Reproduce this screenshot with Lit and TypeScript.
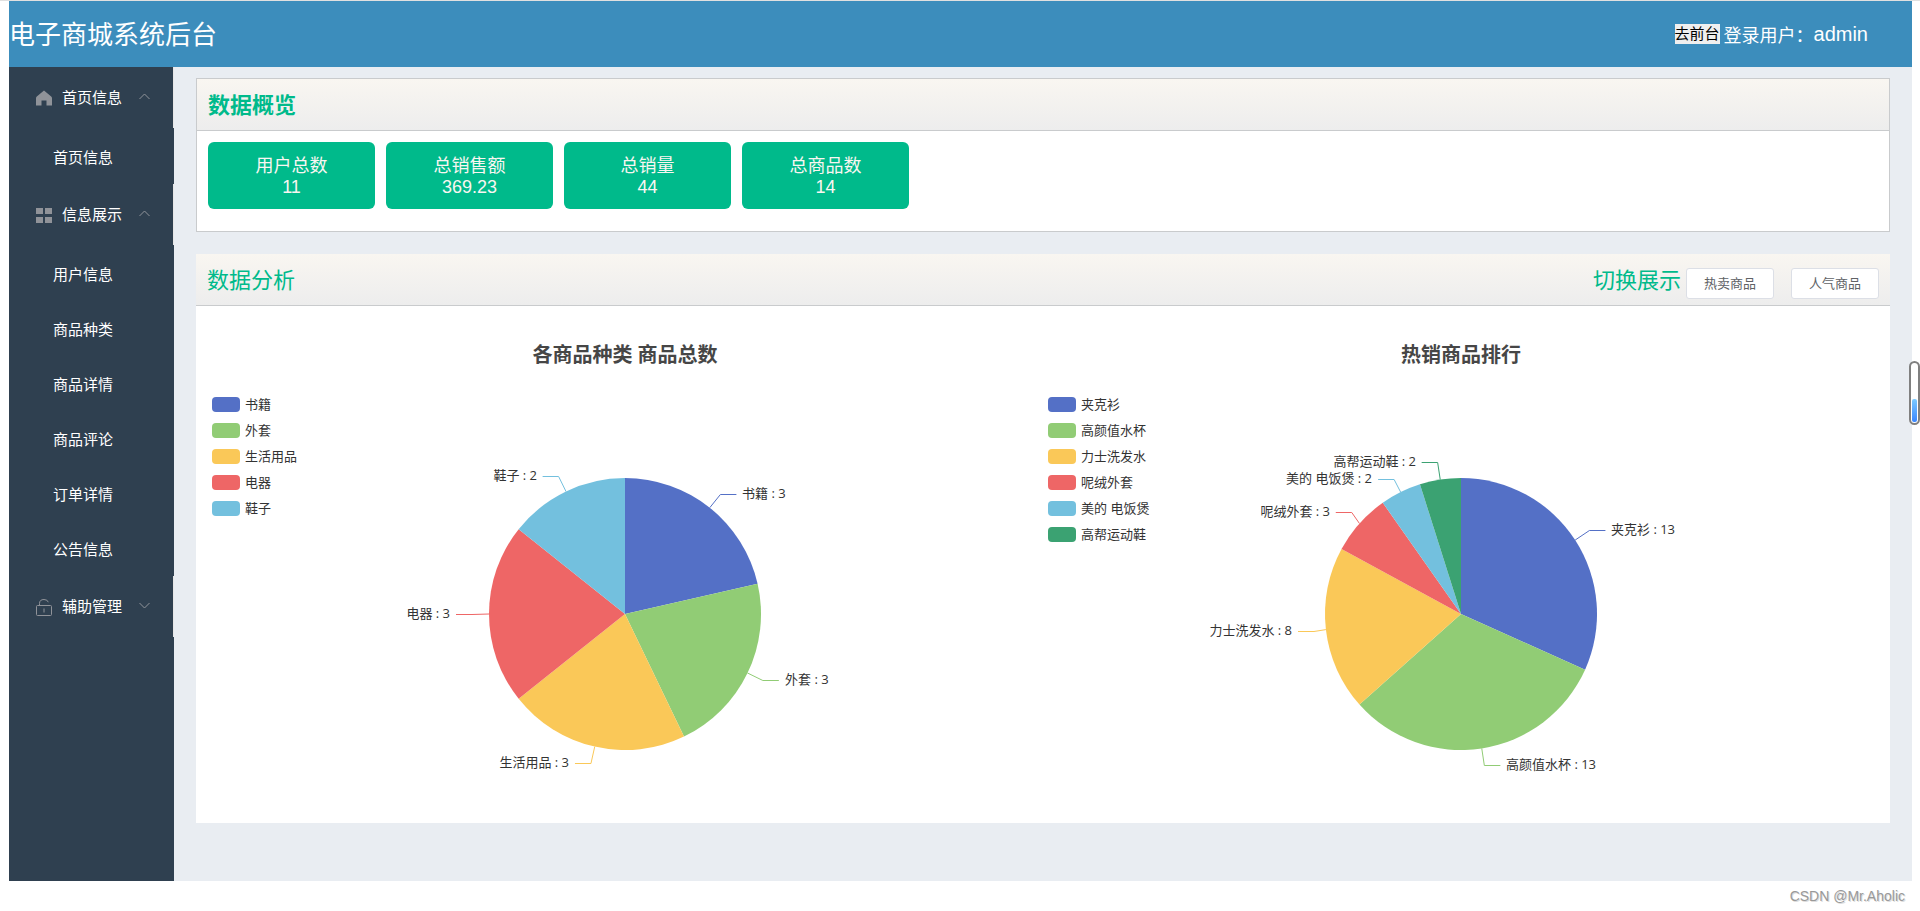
import { LitElement, html, svg, css, nothing } from "lit";
import { customElement, property, state } from "lit/decorators.js";

interface MenuGroup {
  title: string;
  icon: "home" | "grid" | "lock";
  open: boolean;
  items: string[];
}

interface Slice {
  name: string;
  value: number;
  shift?: number;
  drop?: number;
}

const PALETTE = ["#5470c6", "#91cc75", "#fac858", "#ee6666", "#73c0de", "#3ba272"];

const ICONS = {
  home: svg`<path d="M8 0.5 L0.8 6.5 Q0 7.2 0 8.2 V15.5 H5.5 V10.5 H10.5 V15.5 H16 V8.2 Q16 7.2 15.2 6.5 Z" fill="#909399"/>`,
  grid: svg`<path d="M0 1H7V7H0ZM9 1H16V7H9ZM0 10H7V16H0ZM9 10H16V16H9Z" fill="#909399"/>`,
  lock: svg`<g fill="none" stroke="#909399"><rect x="0.5" y="6.5" width="15" height="10" rx="1"/><path d="M3.5 6.5V4.5Q3.5 0.5 8 0.5Q11.5 0.5 12.3 3.2M8 9.5V13.5"/></g>`,
};

@customElement("pie-chart")
class PieChart extends LitElement {
  @property() heading = "";
  @property({ attribute: false }) slices: Slice[] = [];

  static styles = css`
    :host {
      display: grid;
      min-width: 0;
      font-family: "Open Sans", "Noto Sans CJK SC", sans-serif;
      color: #333;
    }
    .heading,
    .legend,
    .plot {
      grid-area: 1 / 1;
    }
    .heading {
      margin: 24px 0 0;
      height: 28px;
      font-size: 20px;
      line-height: 28px;
      text-align: center;
      color: #464646;
    }
    .legend {
      display: flex;
      flex-direction: column;
      gap: 10px;
      justify-self: start;
      margin: 80px 0 0;
      padding: 0 0 0 5px;
      list-style: none;
    }
    .entry {
      display: flex;
      align-items: flex-start;
      gap: 5px;
      height: 16px;
      font-size: 13px;
      line-height: 14px;
    }
    .swatch {
      width: 28px;
      height: 15px;
      border-radius: 4px;
    }
    .plot {
      display: block;
      width: 100%;
      height: auto;
    }
    .label {
      font-size: 13px;
      fill: #333;
    }
  `;

  private renderSlices() {
    const cx = 418;
    const cy = 297;
    const r = 136;
    const reach = r + 17;
    const total = this.slices.reduce((sum, s) => sum + s.value, 0);
    let sum = 0;
    return this.slices.map((s, i) => {
      const a0 = (sum / total) * Math.PI * 2;
      sum += s.value;
      const a1 = (sum / total) * Math.PI * 2;
      const mid = (a0 + a1) / 2;
      const at = (a: number, d: number) => [cx + Math.sin(a) * d, cy - Math.cos(a) * d];
      const [x0, y0] = at(a0, r);
      const [x1, y1] = at(a1, r);
      const [sx, sy] = at(mid, r);
      const [ex, rawY] = at(mid, reach);
      const side = Math.sin(mid) >= 0 ? 1 : -1;
      const elbow = ex + (s.shift ?? 0);
      const ey = Math.floor(rawY) + (s.drop ?? 0) + 0.5;
      const end = elbow + side * 16;
      return svg`
        <path d="M${cx} ${cy}L${x0} ${y0}A${r} ${r} 0 ${a1 - a0 > Math.PI ? 1 : 0} 1 ${x1} ${y1}Z" fill=${PALETTE[i]}></path>
        <polyline points="${sx},${sy} ${elbow},${ey} ${end},${ey}" fill="none" stroke=${PALETTE[i]}></polyline>
        <text class="label" x=${Math.round(end + side * 6)} y=${Math.round(ey + 3)} text-anchor=${side > 0 ? "start" : "end"}>${s.name} : ${s.value}</text>`;
    });
  }

  render() {
    return html`
      <svg class="plot" viewBox="0 0 836 495" role="img" aria-label=${this.heading}>
        ${this.renderSlices()}
      </svg>
      <h3 class="heading">${this.heading}</h3>
      <ul class="legend">
        ${this.slices.map(
          (s, i) => html`<li class="entry">
            <span class="swatch" style="background:${PALETTE[i]}"></span>${s.name}
          </li>`
        )}
      </ul>
    `;
  }
}

@customElement("side-menu")
class SideMenu extends LitElement {
  @state() private groups: MenuGroup[] = [
    { title: "首页信息", icon: "home", open: true, items: ["首页信息"] },
    {
      title: "信息展示",
      icon: "grid",
      open: true,
      items: ["用户信息", "商品种类", "商品详情", "商品评论", "订单详情", "公告信息"],
    },
    { title: "辅助管理", icon: "lock", open: false, items: [] },
  ];

  static styles = css`
    :host {
      display: block;
      flex: none;
      width: 165px;
      background: #2f4050;
      font-family: "Noto Sans CJK SC", sans-serif;
      font-size: 15px;
    }
    .menu {
      display: flex;
      flex-direction: column;
      gap: 1px;
    }
    .title {
      display: flex;
      align-items: center;
      box-sizing: border-box;
      width: 100%;
      height: 61px;
      padding: 0 23px 2px 27px;
      border: 0;
      border-right: 1px solid #e6e6e6;
      background: none;
      font: inherit;
      color: #fff;
      cursor: pointer;
    }
    .icon {
      width: 16px;
      height: 17px;
      margin: 4px 10px 0 0;
    }
    .arrow {
      width: 11px;
      height: 7px;
      margin-left: auto;
      fill: none;
      stroke: #909399;
    }
    .item {
      display: block;
      box-sizing: border-box;
      height: 55px;
      padding: 3px 0 0 44px;
      line-height: 51px;
      color: #fff;
      text-decoration: none;
    }
  `;

  private toggle(index: number) {
    this.groups = this.groups.map((g, i) => (i === index ? { ...g, open: !g.open } : g));
  }

  render() {
    return html`<nav class="menu">
      ${this.groups.map(
        (g, i) => html`<div>
          <button class="title" aria-expanded=${g.open} @click=${() => this.toggle(i)}>
            <svg class="icon" viewBox="0 0 16 17">${ICONS[g.icon]}</svg>
            <span>${g.title}</span>
            <svg class="arrow" viewBox="0 0 11 7">
              <path d=${g.open ? "M0.5 6L5.5 1L10.5 6" : "M0.5 1L5.5 6L10.5 1"}></path>
            </svg>
          </button>
          ${g.open ? g.items.map((t) => html`<a class="item" href="#">${t}</a>`) : nothing}
        </div>`
      )}
    </nav>`;
  }
}

@customElement("app-root")
class AppRoot extends LitElement {
  private stats: [string, string][] = [
    ["用户总数", "11"],
    ["总销售额", "369.23"],
    ["总销量", "44"],
    ["总商品数", "14"],
  ];

  private categories: Slice[] = [
    { name: "书籍", value: 3 },
    { name: "外套", value: 3 },
    { name: "生活用品", value: 3 },
    { name: "电器", value: 3 },
    { name: "鞋子", value: 2 },
  ];

  private ranking: Slice[] = [
    { name: "夹克衫", value: 13 },
    { name: "高颜值水杯", value: 13 },
    { name: "力士洗发水", value: 8, shift: 5 },
    { name: "呢绒外套", value: 3, shift: 5 },
    { name: "美的 电饭煲", value: 2, shift: 1, drop: 3 },
    { name: "高帮运动鞋", value: 2 },
  ];

  static styles = css`
    :host {
      display: block;
      box-sizing: border-box;
      min-height: 100vh;
      padding: 0 8px 0 9px;
      border-top: 1px solid #e0e0e0;
      background: #fff;
      font-family: "Liberation Sans", "Noto Sans CJK SC", sans-serif;
    }
    .topbar {
      display: flex;
      align-items: center;
      justify-content: space-between;
      height: 66px;
      padding-right: 44px;
      background: #3c8dbc;
      color: #fff;
    }
    .brand {
      margin: 0;
      padding-bottom: 3px;
      font-size: 26px;
      font-weight: 400;
    }
    .account {
      display: flex;
      align-items: center;
      font-size: 18px;
    }
    .front {
      height: 20px;
      margin-right: 4px;
      padding: 0;
      border: 0;
      background: #efefef;
      font-family: inherit;
      font-size: 15px;
      line-height: 20px;
      color: #000;
    }
    .user {
      font-size: 20px;
    }
    .layout {
      display: flex;
    }
    .content {
      flex: 1;
      min-width: 0;
      padding: 11px 22px 58px;
      background: #e9edf2;
    }
    .panel {
      background: #fff;
    }
    .panel.outlined {
      margin-bottom: 22px;
      border: 1px solid #c9cbcd;
    }
    .head {
      display: flex;
      align-items: center;
      height: 51px;
      padding: 0 11px;
      border-bottom: 1px solid #c9cbcd;
      background: linear-gradient(#f9f6f1, #ededed);
      color: #00ba8b;
      font-size: 22px;
    }
    .name {
      margin: 0;
      font-size: 22px;
      font-weight: 400;
    }
    .name,
    .caption {
      padding-bottom: 3px;
    }
    .strong {
      font-weight: 700;
    }
    .switch {
      display: flex;
      align-items: center;
      gap: 17px;
      margin-left: auto;
    }
    .caption {
      margin-right: -12px;
    }
    .tab {
      box-sizing: border-box;
      width: 88px;
      height: 31px;
      margin-top: 8px;
      padding: 0 0 2px;
      border: 1px solid #dcdfe6;
      border-radius: 3px;
      background: #fff;
      font-family: inherit;
      font-size: 13px;
      color: #606266;
    }
    .stats {
      display: flex;
      flex-wrap: wrap;
      gap: 11px;
      padding: 11px 11px 22px;
    }
    .stat {
      display: flex;
      flex-direction: column;
      align-items: center;
      justify-content: center;
      box-sizing: border-box;
      width: 167px;
      height: 67px;
      padding-top: 2px;
      border-radius: 6px;
      background: #00ba8b;
      color: #f9f6f1;
      font-size: 18px;
      line-height: 21px;
    }
    .charts {
      display: grid;
      grid-template-columns: 1fr 1fr;
      padding: 11px;
    }
    .credit {
      padding: 7px 7px 0 0;
      text-align: right;
      font-size: 14px;
      line-height: 16px;
      color: #999;
      text-shadow: 1px 1px 0 #ddd;
    }
    .gauge {
      position: absolute;
      top: 361px;
      right: 0;
      display: flex;
      align-items: flex-end;
      box-sizing: border-box;
      width: 11px;
      height: 64px;
      padding: 1px;
      border: 2px solid #808080;
      border-radius: 6px;
      background: #fff;
    }
    .level {
      width: 100%;
      height: 40%;
      border-radius: 2px;
      background: linear-gradient(#7ccbff, #3a86ff);
    }
  `;

  render() {
    return html`
      <header class="topbar">
        <h1 class="brand">电子商城系统后台</h1>
        <div class="account">
          <button class="front">去前台</button>
          <span>登录用户：</span>
          <span class="user">admin</span>
        </div>
      </header>
      <div class="layout">
        <side-menu></side-menu>
        <main class="content">
          <section class="panel outlined">
            <div class="head"><h2 class="name strong">数据概览</h2></div>
            <div class="stats">
              ${this.stats.map(
                ([label, value]) => html`<div class="stat"><span>${label}</span><span>${value}</span></div>`
              )}
            </div>
          </section>
          <section class="panel">
            <div class="head">
              <h2 class="name">数据分析</h2>
              <div class="switch">
                <span class="caption">切换展示</span>
                <button class="tab">热卖商品</button>
                <button class="tab">人气商品</button>
              </div>
            </div>
            <div class="charts">
              <pie-chart heading="各商品种类 商品总数" .slices=${this.categories}></pie-chart>
              <pie-chart heading="热销商品排行" .slices=${this.ranking}></pie-chart>
            </div>
          </section>
        </main>
      </div>
      <footer class="credit">CSDN @Mr.Aholic</footer>
      <div class="gauge"><div class="level"></div></div>
    `;
  }
}
